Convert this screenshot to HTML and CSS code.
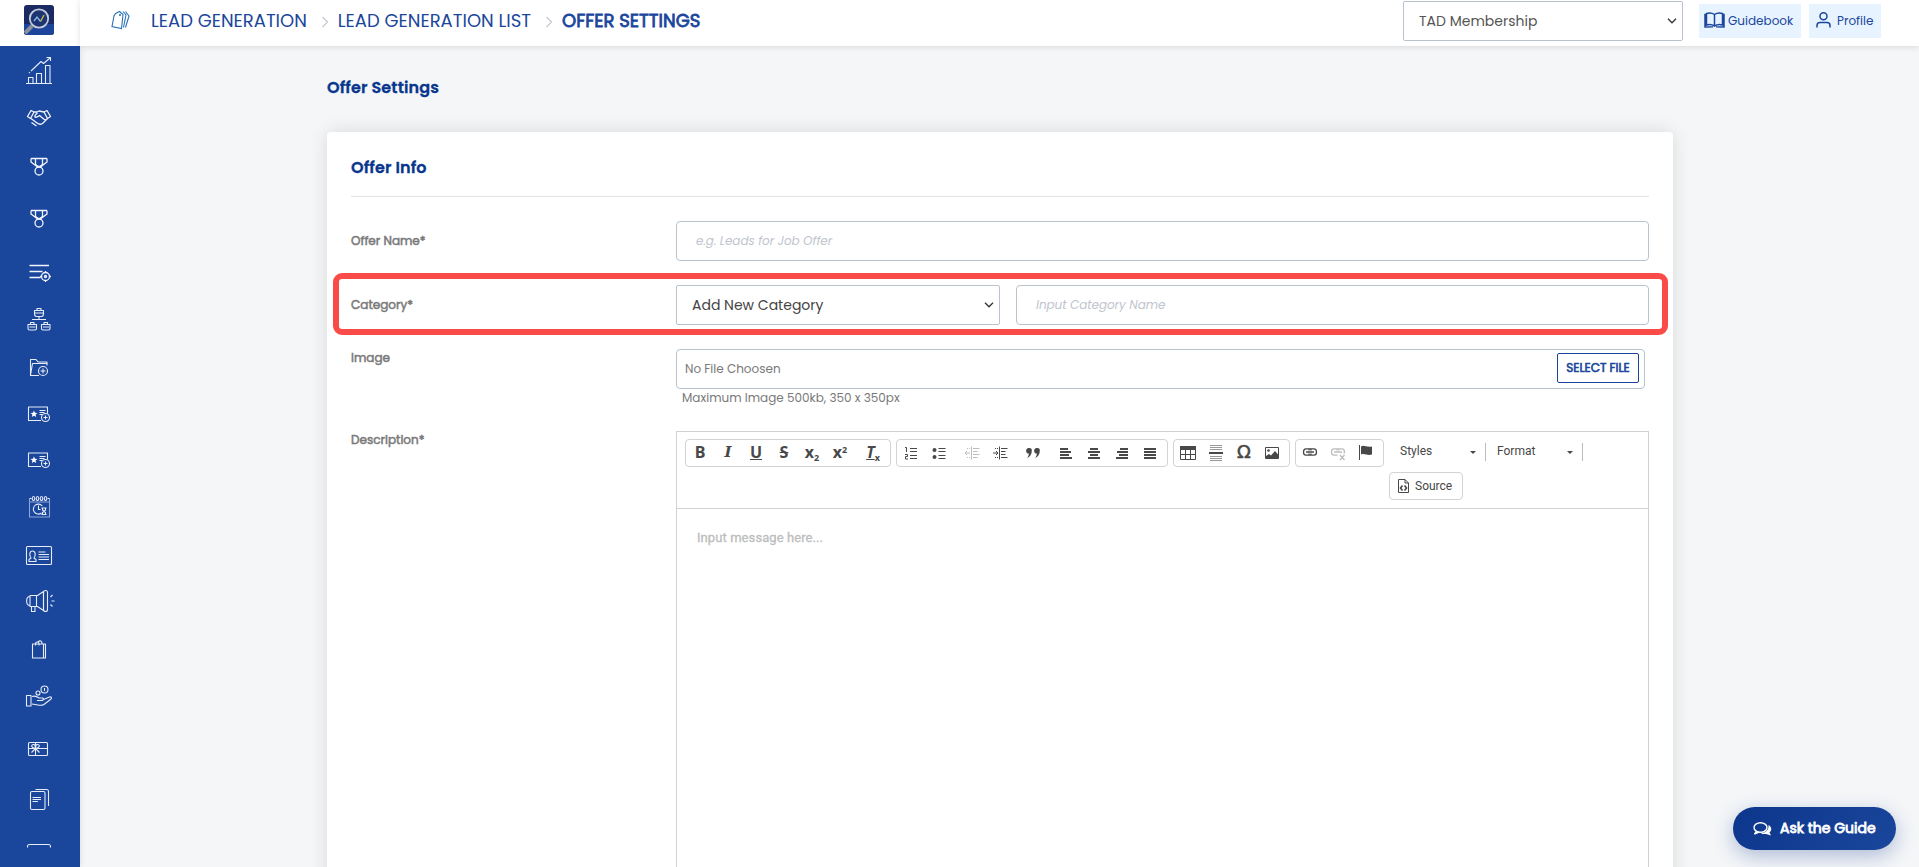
FILE: index.html
```html
<!DOCTYPE html>
<html lang="en">
<head>
    <meta charset="UTF-8">
    <meta name="viewport" content="width=device-width, initial-scale=1.0">
    <title>Offer Settings</title>
    <link rel="stylesheet" href="styles.css">
</head>
<body>
    <aside class="sidebar">
        <a class="logo" href="#">
            <svg width="30" height="30" viewBox="0 0 30 30">
                <rect width="30" height="30" rx="3" fill="#1b2a63"/>
                <path d="M0 19h30v8a3 3 0 0 1-3 3H3a3 3 0 0 1-3-3z" fill="#1c449a"/>
                <path d="M8 21l-7 7" stroke="#8a8f9c" stroke-width="4"/>
                <circle cx="15" cy="13.500" r="9.200" fill="#1d3472" stroke="#c3cbd8" stroke-width="1.800"/>
                <path d="M10 16l3-4 3.500 4.500" fill="none" stroke="#8fb4ea" stroke-width="1.300"/>
                <path d="M16.500 16.500L20 10" fill="none" stroke="#c8c24a" stroke-width="1.300"/>
            </svg>
        </a>
        <ul class="menu">
            <li><svg viewBox="0 0 32 28"><path d="M3 27.500h26M5.500 27v-5.500h4.500v5.500M13.500 27V17.500h5V27M22.500 27V9.500h4.500V27M6 17l.8-.8M8 15l10-9.500 2.500 2L27 2M23.500 1.500H27.500V5"/></svg></li>
            <li><svg class="bold" viewBox="0 0 32 28"><path d="M8 6.500l-3.500 6 3 2L11 8zM24 6.500l3.500 6-3 2L21 8zM11 8h3l2-1 5 1M8 14.500l6 4.500c2 1.500 4 1.500 5.500.5l5-5M14.500 9c-2 1.500-3 3-2.500 4 1.500 1 3-.5 4.500-1.500l6 5M8.500 18.500l5 3.500"/></svg></li>
            <li><svg class="bold" viewBox="0 0 32 28"><path d="M8 6.500h16M8 6.500v3.500l6 4.500h4l6-4.500V6.500M12.500 6.500v6l3.500 2.500 3.500-2.500v-6"/><circle cx="16" cy="19" r="4"/></svg></li>
            <li><svg class="bold" viewBox="0 0 32 28"><path d="M8 6.500h16M8 6.500v3.500l6 4.500h4l6-4.500V6.500M12.500 6.500v6l3.500 2.500 3.500-2.500v-6"/><circle cx="16" cy="19" r="4"/></svg></li>
            <li><svg class="bold" viewBox="0 0 32 28"><path d="M6.500 6.500H26M6.500 12.500h13M6.500 18.500h11M17 17.500h2M26 17.500h2M22.500 12v2M22.500 21v2"/><circle cx="22.500" cy="17.500" r="4"/><circle cx="22.500" cy="17.500" r="1"/></svg></li>
            <li><svg viewBox="0 0 32 28"><path d="M11.500 5.500h9v3q0 3-2 3h-5q-2 0-2-3zM14 5.500v-2h4v2M11.500 8h9M16 11.500v2.500M9 14.500h14M5 19.500h8.500v4q0 1.500-1.500 1.500H6.500Q5 25 5 23.500zM7.500 19.500V17.500h3.500v2M18.500 19.500H27v4q0 1.500-1.500 1.500H20q-1.500 0-1.500-1.500zM21 19.500V17.500h3.500v2M6.500 22h6M20 22h6"/></svg></li>
            <li><svg viewBox="0 0 32 28"><path d="M16 22.500H7.500V6.500h5.500l2 2.500h9v3M7.500 22l2-11.500h14.500v2"/><circle cx="20" cy="18" r="4.500"/><path d="M20 15.500v5M17.500 18h5"/></svg></li>
            <li><svg viewBox="0 0 32 28"><path d="M18 19.500H5.500V6H24.500v6.500M16.500 9.500h6M16.500 11.500h5M16.500 13.500h3"/><path class="solid" d="M11 9.500l1 2.300 2.500.2-1.900 1.600.6 2.400-2.200-1.300-2.200 1.300.6-2.400-1.900-1.600 2.500-.2z"/><circle cx="22.500" cy="16.500" r="4"/><path d="M22.500 14.500v4M20.500 16.500h4"/></svg></li>
            <li><svg viewBox="0 0 32 28"><path d="M18 19.500H5.500V6H24.500v6.500M16.500 9.500h6M16.500 11.500h5M16.500 13.500h3"/><path class="solid" d="M11 9.500l1 2.300 2.500.2-1.900 1.600.6 2.400-2.200-1.300-2.200 1.300.6-2.400-1.900-1.600 2.500-.2z"/><circle cx="22.500" cy="16.500" r="4"/><path d="M22.500 14.500v4M20.500 16.500h4"/></svg></li>
            <li><svg viewBox="0 0 32 28"><path class="thin" d="M6.500 5.500v18.500h20V5.500M6.500 9h20"/><path d="M6.500 5.500h2M24.500 5.500h2"/><ellipse cx="10.500" cy="5.500" rx="1.300" ry="2"/><ellipse cx="14.500" cy="5.500" rx="1.300" ry="2"/><ellipse cx="18.500" cy="5.500" rx="1.300" ry="2"/><ellipse cx="22.500" cy="5.500" rx="1.300" ry="2"/><path d="M18.500 20a5 5 0 1 1 .8-7M15.500 12.500v4h2M18.500 15h5M18.500 21.500h5M19.500 15v2l3 2.500v2M22.500 15v2l-3 2.500v2"/></svg></li>
            <li><svg viewBox="0 0 32 28"><rect x="3.500" y="4.500" width="25" height="18" rx="1"/><path d="M6 19.500v-2l2-1.500c-2-3-1.500-7 1.500-7s3.500 4 1.500 7l2 1.500v2zM15.500 10h7M15.500 12.500h10.500M15.500 15h10.500M15.500 17.500h10.500"/></svg></li>
            <li><svg viewBox="0 0 32 28"><path d="M7 8.500h7.500l6-4v19l-6-4H7zM7 9.500c-4.500 0-4.500 9 0 9M13.500 8.500v11M8.500 19.500v5h3.500v-5"/><rect x="20.500" y="3.500" width="4" height="21" rx="2"/><path d="M28.500 14h3M27.500 10l2-2M27.500 17.500l2 2"/></svg></li>
            <li><svg viewBox="0 0 32 28"><path d="M9.500 9h13v14h-13zM20.500 9v14M12.500 10.500V8.500c0-2 3.500-2 3.500 0v2M15 7c2-2 4-1 4 1.500"/></svg></li>
            <li><svg viewBox="0 0 32 28"><path d="M3.500 13.500h4.500v10.500H3.500zM9 14.500c3-1 5 0 7 1.500h4c1 1.500 0 2.500-2 2.500h-4M20.500 17.500l6-2.500c2-.5 2.500 1 1.500 2l-7 5.500c-2 1-4 1-6 .5l-6-1"/><circle cx="21.500" cy="7.500" r="3.500"/><circle cx="15" cy="11" r="2"/><path d="M21.500 6v3"/></svg></li>
            <li><svg viewBox="0 0 32 28"><rect x="5.500" y="7.500" width="19" height="13" rx="1"/><path d="M6 13.500h18.500M12.500 8v12.500M12.500 13.500C8 13 8 10 10 9.500s2.500 2 2.500 4c0-2 .5-4.500 2.500-4s2 3.500-2.500 4M12.500 13.500l-4 4M12.500 13.500l4 4"/></svg></li>
            <li><svg viewBox="0 0 32 28"><rect x="7.500" y="5.500" width="14.500" height="18" rx="1.500"/><path d="M12.500 3.500h11c1 0 2 1 2 2v14.500M9.500 11.500h8.500M9.500 13.500h8.500M9.500 15.500h5.500"/></svg></li>
            <li><svg viewBox="0 0 32 28"><path d="M4.500 14.500v-1q0-2 2-2h19q2 0 2 2v1"/></svg></li>
        </ul>
    </aside>

    <header class="topbar">
        <svg class="tag" width="20" height="20" viewBox="0 0 20 20"><path d="M5.500 3.500L9.500 1.500l3.500 3-1.500 14L2 16.500 4 6zM13 1.500l3 3.500-2.500 12.500M15.500 1.500L19 6l-3.500 11.500"/><circle cx="10" cy="5" r=".5"/></svg>
        <nav class="crumbs">
            <a href="#">LEAD GENERATION</a>
            <svg width="8" height="12" viewBox="0 0 8 12"><path d="M1.500 1l5 5-5 5"/></svg>
            <a href="#">LEAD GENERATION LIST</a>
            <svg width="8" height="12" viewBox="0 0 8 12"><path d="M1.500 1l5 5-5 5"/></svg>
            <a class="current" href="#">OFFER SETTINGS</a>
        </nav>
        <div class="select account"><span>TAD Membership</span><svg width="10" height="6" viewBox="0 0 10 6"><path d="M1 .8l4 4 4-4"/></svg></div>
        <a class="tool guidebook" href="#">
            <svg width="21" height="16" viewBox="0 0 21 16"><path d="M10.500 2.500C8 .8 5 .8 2.500 1.500v11.500c3-.8 5.500-.5 8 1 2.500-1.500 5-1.800 8-1V1.500c-2.500-.7-5.500-.7-8 1zM10.500 2.500V14M2.500 2.500H1V15l8-.3M18.500 2.500H20V15l-8-.3"/></svg>
            <span>Guidebook</span>
        </a>
        <a class="tool profile" href="#">
            <svg width="15" height="16" viewBox="0 0 15 16"><circle cx="7.500" cy="4.300" r="3.500"/><path d="M1 15.500v-2c0-2 1-3 3-3h7c2 0 3 1 3 3v2"/></svg>
            <span>Profile</span>
        </a>
    </header>

    <main class="page">
        <h1>Offer Settings</h1>
        <section class="card">
            <h2>Offer Info</h2>
            <div class="row">
                <label>Offer Name*</label>
                <input class="field" type="text" placeholder="e.g. Leads for Job Offer">
            </div>
            <div class="row category">
                <label>Category*</label>
                <div class="pair">
                    <div class="select"><span>Add New Category</span><svg width="10" height="6" viewBox="0 0 10 6"><path d="M1 .8l4 4 4-4"/></svg></div>
                    <input class="field" type="text" placeholder="Input Category Name">
                </div>
                <div class="highlight"></div>
            </div>
            <div class="row image">
                <label>Image</label>
                <div>
                    <div class="file"><span>No File Choosen</span><button>SELECT FILE</button></div>
                    <p class="hint">Maximum Image 500kb, 350 x 350px</p>
                </div>
            </div>
            <div class="row description">
                <label>Description*</label>
                <div class="editor">
                    <div class="toolbar">
                        <div class="group">
                            <i><b>B</b></i>
                            <i><b class="it">I</b></i>
                            <i><b class="un">U</b></i>
                            <i><b class="st">S</b></i>
                            <i><b>x<small class="sub">2</small></b></i>
                            <i><b>x<small class="sup">2</small></b></i>
                            <i class="gap"><b class="clear">T<small class="sub">x</small></b></i>
                        </div>
                        <div class="group">
                            <i><svg viewBox="0 0 16 16"><path d="M7 3.500h7M7 6.500h7M7 10.500h7M7 13.500h7"/><path d="M2 2.500h1.500V7M2 9.500h2.500v2H2.500v2.500H5"/></svg></i>
                            <i><svg viewBox="0 0 16 16"><path d="M7.500 3.500h7M7.500 6.500h7M7.500 10.500h7M7.500 13.500h7"/><circle class="solid" cx="3.500" cy="5" r="2"/><circle class="solid" cx="3.500" cy="12" r="2"/></svg></i>
                            <i class="gap off"><svg viewBox="0 0 16 16"><path d="M7.500 1.500v13M9 3.500h6.500M9 6.500h4.500M9 9.500h6.500M9 12.500h4.500M1 8h5M3 6L1 8l2 2"/><path stroke-dasharray="1 1" d="M3 3.500h4M3 12.500h4"/></svg></i>
                            <i><svg viewBox="0 0 16 16"><path d="M7.500 1.500v13M9 3.500h6.500M9 6.500h4.500M9 9.500h4.500M9 12.500h6.500M1 8h5M4 6l2 2-2 2"/><path stroke-dasharray="1 1" d="M3 3.500h4M3 12.500h4"/></svg></i>
                            <i class="gap"><svg viewBox="0 0 16 16"><path class="solid" d="M4 3a2.600 2.600 0 0 1 2.800 2.800C6.800 9.500 5 12 2 13c1.300-1.500 1.800-3 1.800-4.500A2.700 2.700 0 0 1 4 3zM12 3a2.600 2.600 0 0 1 2.800 2.800C14.800 9.500 13 12 10 13c1.300-1.500 1.800-3 1.800-4.500A2.700 2.700 0 0 1 12 3z"/></svg></i>
                            <i class="gap"><svg class="lines" viewBox="0 0 16 16"><path d="M2 4h8M2 7h11M2 10h9M2 13h12"/></svg></i>
                            <i><svg class="lines" viewBox="0 0 16 16"><path d="M4 4h8M2 7h12M4 10h8M2 13h12"/></svg></i>
                            <i><svg class="lines" viewBox="0 0 16 16"><path d="M6 4h8M3 7h11M5 10h9M2 13h12"/></svg></i>
                            <i><svg class="lines" viewBox="0 0 16 16"><path d="M2 4h12M2 7h12M2 10h12M2 13h12"/></svg></i>
                        </div>
                        <div class="group">
                            <i><svg viewBox="0 0 16 16"><path class="solid" d="M0 1h16v4H0z"/><path d="M.5 1.500h15v13H.5zM.5 9.500h15M5.500 5v9.500M10.500 5v9.500"/></svg></i>
                            <i><svg viewBox="0 0 16 16"><path class="dim" d="M2 .5h12M2 2.500h12M2 4.500h12M2 11.500h12M2 13.500h12M2 15.500h12"/><path stroke-width="2" d="M1 8h14"/></svg></i>
                            <i><b class="omega">Ω</b></i>
                            <i><svg viewBox="0 0 16 16"><path d="M1.500 2.500h13v11h-13z"/><circle class="solid" cx="4.500" cy="5.500" r="1.300"/><path class="solid" d="M2 13V11l3-2 2 1.500L11 6l3.500 4v3z"/></svg></i>
                        </div>
                        <div class="group">
                            <i><svg viewBox="0 0 16 16"><path stroke-width="1.300" d="M9 5.500V5c0-.8-.5-1.200-1.500-1.200H4Q1.500 3.800 1.500 7T4 10.200h3.500c1 0 1.500-.4 1.500-1.200v-.5M7 5.500V5c0-.8.500-1.200 1.500-1.200H12q2.500 0 2.500 3.200T12 10.200H8.500C7.500 10.200 7 9.800 7 9v-.5M4 7h8"/></svg></i>
                            <i class="off"><svg viewBox="0 0 16 16"><path stroke-width="1.300" d="M9 5.500V5c0-.8-.5-1.200-1.500-1.200H4Q1.500 3.800 1.500 7T4 10.200h3.500M7 5.500V5c0-.8.500-1.200 1.500-1.200H12q2.500 0 2.500 3.200l-.5 1.500M4 7h8M10 10l4.500 5M14.500 10L10 15"/></svg></i>
                            <i><svg viewBox="0 0 16 16"><path d="M1.500 0v15"/><path class="solid" d="M3 1.500c3-2 5 1 11 0v8c-5 1.500-7-1.500-11 0z"/></svg></i>
                        </div>
                        <div class="combos">
                            <span class="combo">Styles</span>
                            <span class="combo">Format</span>
                        </div>
                        <div class="group source">
                            <svg viewBox="0 0 16 16"><path d="M3.500 1.500h6.500l3.500 3.500v9.500h-10zM10 1.500V5h3.500"/><path stroke-width="1.600" d="M7.500 7.500l-2 2.500 2 2.500M9.500 7.500l2 2.500-2 2.500"/></svg>
                            <span>Source</span>
                        </div>
                    </div>
                    <p class="message">Input message here...</p>
                </div>
            </div>
        </section>
    </main>

    <a class="guide" href="#">
        <svg width="19" height="16" viewBox="0 0 19 16"><ellipse cx="7.500" cy="6.500" rx="6.500" ry="4.800"/><path d="M3.500 10.500L1.500 13l4.500-2"/><path class="back" d="M15.500 4c3.500 2 3.500 5.500 1 7.500l1.500 3-5-1.500c-2 .3-4 0-5-.8 5 0 8-3.500 7.500-8.200z"/></svg>
        <span>Ask the Guide</span>
    </a>
</body>
</html>
```

FILE: styles.css
```css
* {
    box-sizing: border-box;
    margin: 0;
    padding: 0;
}

body {
    display: grid;
    grid-template: 46px 821px / 80px 1fr;
    height: 867px;
    overflow: hidden;
    background: #f4f6f8;
    color: #797979;
    font-family: Poppins, Inter, sans-serif;
    font-size: 12px;
}

a {
    color: #1a469c;
    text-decoration: none;
}

svg {
    display: block;
    flex: none;
    fill: none;
}

/* sidebar */
.sidebar {
    grid-row: 1 / 3;
    background: #1a469c;
    box-shadow: 0 0 6px rgba(0, 0, 0, .12);
}

.logo {
    display: block;
    height: 46px;
    padding: 5px 0 0 24px;
    background: #fff;
}

.menu {
    list-style: none;
    padding: 10px 0 0 23px;
}

.menu li {
    height: 48px;
}

.menu li:nth-child(3) { height: 52px; }
.menu li:nth-child(4) { height: 55px; }
.menu li:nth-child(5) { height: 46px; }
.menu li:nth-child(8) { height: 46px; }
.menu li:nth-child(9) { height: 46px; }
.menu li:nth-child(10) { height: 49px; }
.menu li:nth-child(11) { height: 45px; }
.menu li:nth-child(12) { height: 48px; }
.menu li:nth-child(13) { height: 47px; }
.menu li:nth-child(14) { height: 53px; }
.menu li:nth-child(15) { height: 51px; }
.menu li:nth-child(16) { height: 47px; }
.menu li:nth-child(17) { height: 28px; }

.menu svg {
    width: 32px;
    height: 28px;
    stroke: #e6ecf8;
    stroke-width: 1.1;
    stroke-linejoin: round;
}

.menu .bold {
    stroke: #f2f5fb;
    stroke-width: 1.3;
}

.menu .solid {
    fill: #fff;
    stroke: none;
}

.menu .thin {
    stroke: #8ea6d4;
}

/* top bar */
.topbar {
    display: flex;
    align-items: flex-start;
    height: 46px;
    padding: 0 38px 0 30px;
    background: #fff;
    box-shadow: 0 1px 6px rgba(0, 0, 0, .12);
}

.tag {
    margin-top: 10px;
    stroke: #2a72b8;
    stroke-width: 1.1;
}

.crumbs {
    display: flex;
    width: 1273px;
    padding: 9px 0 0 21px;
    font-size: 18px;
    line-height: 24px;
    white-space: nowrap;
}

.crumbs svg {
    margin: 7px 9px 0 14px;
    stroke: #c6c9d2;
    stroke-width: 1.3;
}

.crumbs .current {
    -webkit-text-stroke: .8px #1a469c;
}

.select {
    display: flex;
    align-items: center;
    justify-content: space-between;
    height: 40px;
    padding: 0 5px 0 15px;
    border: 1px solid #b9c3cd;
    border-radius: 2px;
    background: #fff;
    color: #444;
    font-size: 14px;
    white-space: nowrap;
}

.select svg {
    stroke: #333;
    stroke-width: 1.3;
}

.account {
    flex: none;
    width: 280px;
    margin: 1px 16px 0 0;
    color: #555;
}

.tool {
    display: flex;
    flex: none;
    height: 34px;
    margin-top: 4px;
    padding-top: 8px;
    background: #e7f4ff;
    font-size: 12px;
    line-height: 18px;
}

.tool svg {
    stroke: #1a469c;
    stroke-width: 1.5;
}

.guidebook {
    width: 102px;
    margin-right: 8px;
    padding-left: 5px;
    gap: 3px;
}

.profile {
    width: 72px;
    padding-left: 7px;
    gap: 6px;
}

/* content */
.page {
    width: 1346px;
    margin-left: 247px;
}

h1,
h2 {
    color: #08368d;
    font-size: 16px;
    font-weight: 600;
    letter-spacing: .12px;
    line-height: 24px;
    -webkit-text-stroke: .3px #08368d;
}

h1 {
    height: 86px;
    padding-top: 30px;
}

.card {
    height: 760px;
    padding: 0 24px;
    border-radius: 4px;
    background: #fff;
    box-shadow: 0 0 18px rgba(0, 0, 0, .12);
}

h2 {
    height: 65px;
    padding-top: 24px;
    margin-bottom: 24px;
    border-bottom: 1px solid #e2e2e2;
}

.row {
    position: relative;
    display: grid;
    grid-template-columns: 325px 973px;
}

.row label {
    line-height: 18px;
    padding-top: 11px;
    -webkit-text-stroke: .5px #797979;
}

.field {
    width: 100%;
    height: 40px;
    padding: 0 19px;
    border: 1px solid #b9c3cd;
    border-radius: 4px;
    background: #fff;
    font-family: inherit;
    font-size: 12px;
    letter-spacing: -.06px;
}

.field::placeholder {
    color: #bfc5ce;
    font-style: italic;
}

.category {
    margin-top: 24px;
}

.pair {
    display: grid;
    grid-template-columns: 324px 633px;
    gap: 16px;
}

.highlight {
    position: absolute;
    top: -12px;
    left: -18px;
    width: 1335px;
    height: 61.500px;
    border: 6px solid #f94b47;
    border-radius: 9px;
}

.image {
    margin-top: 24px;
}

.image label,
.description label {
    padding-top: 0;
}

.file {
    display: flex;
    align-items: center;
    justify-content: space-between;
    width: 969px;
    height: 40px;
    padding: 0 5px 0 8px;
    border: 1px solid #b9c3cd;
    border-radius: 4px;
}

.file button {
    width: 82px;
    height: 30px;
    margin-top: -2px;
    border: 1px solid #1a469c;
    border-radius: 2px;
    background: #fff;
    color: #1a469c;
    font: 12px Poppins, Inter, sans-serif;
    letter-spacing: -.05px;
    white-space: nowrap;
    -webkit-text-stroke: .6px #1a469c;
}

.hint {
    height: 42px;
    padding-left: 6px;
    line-height: 17px;
}

/* editor */
.editor {
    height: 470px;
    border: 1px solid #d1d1d1;
    font-family: Roboto, Arial, sans-serif;
}

.toolbar {
    display: flex;
    flex-wrap: wrap;
    align-content: flex-start;
    height: 77px;
    padding: 7px 0 0 8px;
    border-bottom: 1px solid #d1d1d1;
    color: #484848;
    font-size: 12px;
}

.group {
    display: flex;
    align-items: center;
    height: 28px;
    margin: 0 5px 5px 0;
    padding-right: 3px;
    border: 1px solid #d3d3d3;
    border-radius: 4px;
}

.group i {
    display: flex;
    align-items: center;
    justify-content: center;
    width: 28px;
    height: 26px;
    font-style: normal;
}

.group .gap {
    margin-left: 5px;
}

.group svg {
    width: 16px;
    height: 16px;
    stroke: #484848;
}

.group .off {
    opacity: .35;
}

.group .solid {
    fill: #484848;
    stroke: none;
}

.group .dim {
    stroke: #999;
}

.group .lines {
    stroke-width: 2;
}

.group b {
    padding-bottom: 2px;
    font: bold 16px/16px "Open Sans", sans-serif;
}

.group .it {
    font-family: "DejaVu Serif", serif;
    font-style: italic;
    font-size: 15px;
}

.group .un {
    text-decoration: underline;
}

.group .st {
    text-decoration: line-through;
}

.group .clear {
    font-style: italic;
    text-decoration: underline;
}

.group small {
    display: inline-block;
    font-size: 9px;
    font-style: normal;
    line-height: 8px;
}

.group .sub {
    transform: translateY(3px);
}

.group .sup {
    transform: translateY(-5px);
}

.group .omega {
    font: 18px/16px "DejaVu Sans", sans-serif;
    -webkit-text-stroke: .6px #484848;
}

.combos {
    display: flex;
    padding-top: 4px;
}

.combo {
    position: relative;
    width: 97px;
    height: 18px;
    padding-left: 11px;
    border-right: 1px solid #bcbcbc;
    line-height: 17px;
}

.combo::after {
    content: "";
    position: absolute;
    top: 8px;
    right: 9px;
    border: 3px solid transparent;
    border-top-color: #484848;
}

.source {
    width: 74px;
    margin-left: 704px;
    padding-left: 5px;
    gap: 4px;
}

.source span {
    padding-bottom: 1px;
}

.message {
    padding: 20px 0 0 20px;
    color: #bdbdbd;
    font-size: 13px;
    letter-spacing: .08px;
    line-height: 18px;
    -webkit-text-stroke: .3px #bdbdbd;
}

/* floating button */
.guide {
    position: absolute;
    right: 23px;
    bottom: 17px;
    display: flex;
    align-items: center;
    width: 163px;
    height: 43px;
    padding-left: 20px;
    gap: 8px;
    border-radius: 22px;
    background: linear-gradient(135deg, #0c368c, #1a469c);
    box-shadow: 0 6px 20px rgba(12, 54, 140, .3);
    color: #fff;
    font-size: 14px;
    white-space: nowrap;
    -webkit-text-stroke: .8px #fff;
}

.guide svg {
    stroke: #fff;
    stroke-width: 1.4;
}

.guide .back {
    fill: #fff;
    stroke: none;
}
```
